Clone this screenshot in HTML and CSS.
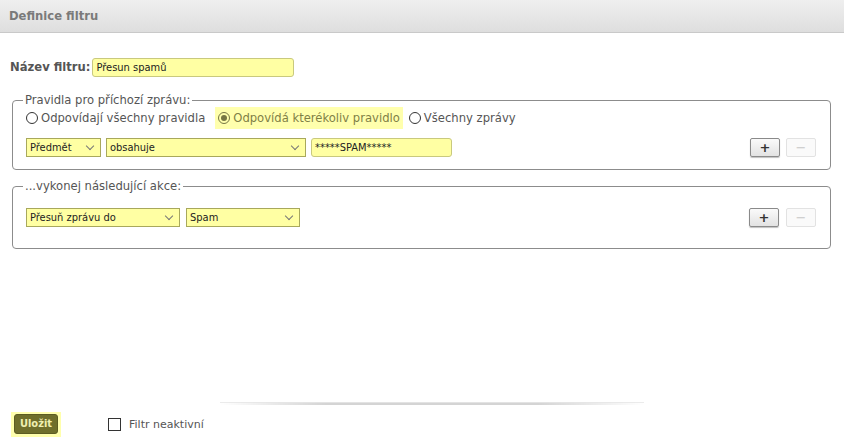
FILE: index.html
```html
<!DOCTYPE html>
<html lang="cs">
<head>
<meta charset="utf-8">
<title>Definice filtru</title>
<link rel="stylesheet" href="styles.css">
</head>
<body>
<div class="page">
  <div class="header">Definice filtru</div>
  <div class="content">
    <div class="name-row">
      <span class="name-label">Název filtru:</span>
      <span class="field name-field">Přesun spamů</span>
    </div>

    <fieldset class="group rules">
      <legend>Pravidla pro příchozí zprávu:</legend>
      <div class="radios">
        <label class="radio"><span class="dot"></span>Odpovídají všechny pravidla</label>
        <label class="radio checked"><span class="dot"></span>Odpovídá kterékoliv pravidlo</label>
        <label class="radio"><span class="dot"></span>Všechny zprávy</label>
      </div>
      <div class="row">
        <span class="field select sel-subject">Předmět<span class="chev"></span></span>
        <span class="field select sel-op">obsahuje<span class="chev"></span></span>
        <span class="field value-field">*****SPAM*****</span>
        <span class="spacer"></span>
        <span class="btn plus">+</span>
        <span class="btn minus disabled">−</span>
      </div>
    </fieldset>

    <fieldset class="group actions">
      <legend>...vykonej následující akce:</legend>
      <div class="row">
        <span class="field select sel-action">Přesuň zprávu do<span class="chev"></span></span>
        <span class="field select sel-folder">Spam<span class="chev"></span></span>
        <span class="spacer"></span>
        <span class="btn plus">+</span>
        <span class="btn minus disabled">−</span>
      </div>
    </fieldset>
  </div>

  <div class="footer">
    <div class="shadow-line"></div>
    <div class="footer-row">
      <span class="save-wrap"><span class="save">Uložit</span></span>
      <label class="check"><span class="box"></span>Filtr neaktivní</label>
    </div>
  </div>
</div>
</body>
</html>
```

FILE: styles.css
```css
html, body {
  margin: 0;
  padding: 0;
  background: #fff;
}
body {
  font-family: "DejaVu Sans", Verdana, sans-serif;
  font-size: 11.6px;
  color: #555;
}
.page {
  height: 447px;
  display: flex;
  flex-direction: column;
}
.header {
  height: 33px;
  box-sizing: border-box;
  border-bottom: 1px solid #c9c9c9;
  background: linear-gradient(#efefef, #dedede);
  padding: 9px 0 0 9px;
  font-family: "DejaVu Sans", sans-serif;
  font-weight: bold;
  font-size: 11.6px;
  color: #7a7a7a;
}
.content {
  padding: 24px 13px 0 12px;
}
.name-row {
  display: flex;
  align-items: center;
  height: 20px;
  margin-bottom: 16px;
}
.name-label {
  font-family: "DejaVu Sans", sans-serif;
  font-weight: bold;
  font-size: 11.6px;
  color: #555;
  margin-left: -2px;
  margin-right: 2px;
}
.field {
  box-sizing: border-box;
  height: 19px;
  display: inline-flex;
  align-items: center;
  background: #ffffa3;
  border: 1px solid #c9c97e;
  border-radius: 3px;
  padding: 0 0 0 3px;
  font-family: "DejaVu Sans Condensed", "DejaVu Sans", sans-serif;
  font-size: 11px;
  color: #222;
  position: relative;
}
.name-field {
  width: 202px;
}
.select {
  border-radius: 0;
  border-color: #a8a85c;
}
.chev {
  position: absolute;
  right: 7px;
  top: 4px;
  width: 5px;
  height: 5px;
  border-right: 1px solid #777;
  border-bottom: 1px solid #777;
  transform: rotate(45deg);
}
.sel-subject { width: 75px; }
.sel-op { width: 200px; }
.value-field { width: 141px; }
.sel-action { width: 154px; }
.sel-folder { width: 114px; }

.group {
  margin: 0;
  border: 1px solid #8c8c8c;
  border-radius: 4px;
  padding: 0 14px 0 13px;
}
.group legend {
  padding: 0 2px;
  margin-left: -3px;
  font-size: 11.6px;
  color: #555;
}
.rules {
  height: 77px;
  box-sizing: border-box;
}
.actions {
  margin-top: 9px;
  height: 70px;
  box-sizing: border-box;
}
.radios {
  display: flex;
  align-items: center;
  height: 22px;
}
.radio {
  display: inline-flex;
  align-items: center;
  height: 22px;
  color: #555;
}
.radio .dot {
  box-sizing: border-box;
  width: 12px;
  height: 12px;
  border: 1px solid #333;
  border-radius: 50%;
  margin-right: 3px;
  position: relative;
}
.radio + .radio {
  margin-left: 10px;
}
.radio.checked {
  background: #ffffad;
  padding: 0 3px;
  color: #7f7f46;
}
.radio.checked + .radio {
  margin-left: 6px;
}
.radio.checked .dot {
  border-color: #777744;
}
.radio.checked .dot::after {
  content: "";
  position: absolute;
  left: 2px;
  top: 2px;
  width: 6px;
  height: 6px;
  border-radius: 50%;
  background: #777744;
}
.row {
  display: flex;
  align-items: center;
}
.rules .row {
  margin-top: 9px;
  gap: 5px;
}
.actions .row {
  margin-top: 15px;
  gap: 6px;
}
.spacer {
  flex: 1;
}
.btn {
  box-sizing: border-box;
  width: 30px;
  height: 19px;
  display: inline-flex;
  align-items: center;
  justify-content: center;
  border-radius: 2px;
  font-family: "DejaVu Sans", sans-serif;
  font-weight: bold;
  font-size: 13px;
}
.btn.plus {
  border: 1px solid #8a8a8a;
  background: linear-gradient(#fafafa, #e2e2e2);
  box-shadow: 0 1px 1px rgba(0,0,0,0.25);
  color: #333;
}
.btn.minus {
  margin-left: 1px;
  border: 1px solid #e2e2e2;
  background: #fafafa;
  color: #c8c8c8;
  font-weight: normal;
}

.footer {
  margin-top: auto;
  padding-bottom: 10px;
}
.shadow-line {
  height: 2px;
  margin: 0 200px 7px 220px;
  background: linear-gradient(to right, rgba(200,200,200,0) 0%, #d4d4d4 25%, #d4d4d4 75%, rgba(200,200,200,0) 100%);
  border-top: 1px solid rgba(230,230,230,0.8);
}
.footer-row {
  display: flex;
  align-items: center;
  padding-left: 11px;
}
.save-wrap {
  background: #ffffad;
  padding: 2px 3px 3px 3px;
}
.save {
  display: inline-block;
  box-sizing: border-box;
  width: 44px;
  height: 20px;
  line-height: 18px;
  text-align: center;
  background: #6f6f2b;
  border: 1px solid #5c5c22;
  border-radius: 3px;
  color: #efefb0;
  font-family: "DejaVu Sans Condensed", "DejaVu Sans", sans-serif;
  font-weight: bold;
  font-size: 11px;
}
.check {
  display: inline-flex;
  align-items: center;
  margin-left: 47px;
  font-size: 11px;
  color: #555;
}
.check .box {
  box-sizing: border-box;
  width: 13px;
  height: 13px;
  border: 1px solid #333;
  margin-right: 8px;
}
```
